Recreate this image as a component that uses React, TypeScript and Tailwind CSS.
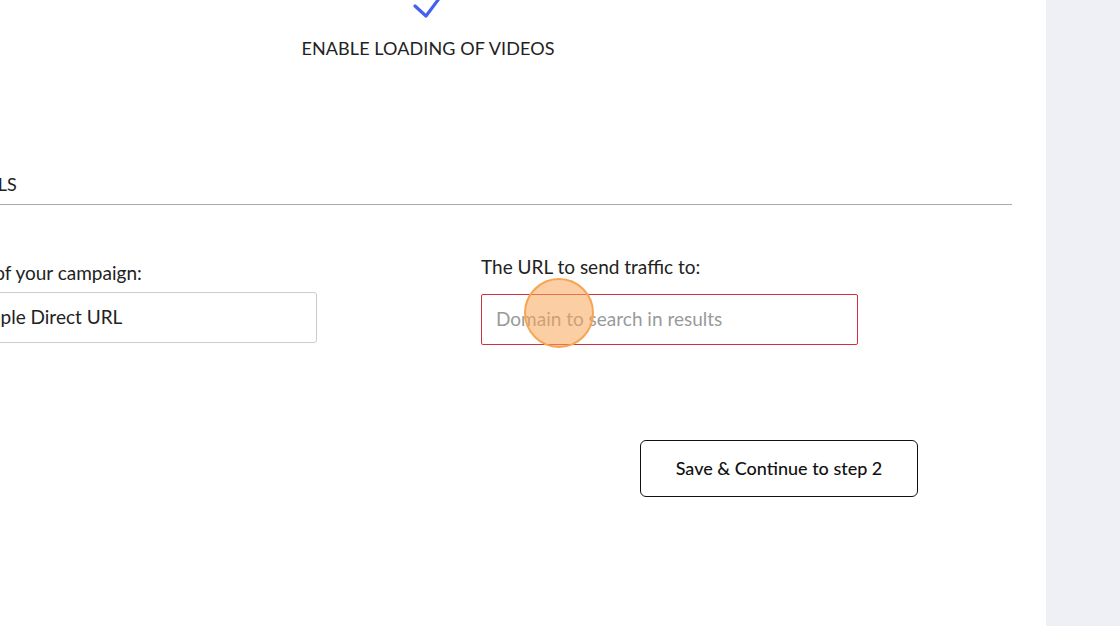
export default function App() {
  return (
    <div
      className="flex h-[626px] w-[1120px] overflow-hidden bg-white text-[#222]"
      style={{ fontFamily: "Lato, 'Noto Sans', sans-serif" }}
    >
      <main className="relative flex-1 overflow-hidden bg-white">
        {/* option: enable videos */}
        <div className="ml-[278px] flex w-[300px] flex-col items-center">
          <svg
            width="30"
            height="20"
            viewBox="0 0 30 20"
            className="-mt-[1px]"
            fill="none"
            stroke="#4361ee"
            strokeWidth="3.2"
            strokeLinecap="round"
            strokeLinejoin="round"
          >
            <polyline points="2,7 13,17 28,-3" />
          </svg>
          <span className="mt-[17px] text-[18px] leading-6 tracking-[0.1px]">
            ENABLE LOADING OF VIDEOS
          </span>
        </div>

        <section className="-ml-[60px] mr-[34px] mt-[112px]">
          <h3 className="border-b border-[#aaa] pb-[8px] pl-[7px] text-[18px] leading-6">
            DETAILS
          </h3>

          <div className="mt-[50px] flex gap-[164px]">
            <div className="w-[377px] pt-[6px]">
              <label className="block text-[19px] leading-6">
                Name of your campaign:
              </label>
              <div className="mt-[7px] flex h-[51px] items-center rounded-[3px] border border-[#ccc] px-[14px] text-[19px]">
                Example Direct URL
              </div>
            </div>
            <div className="w-[377px]">
              <label className="block text-[19px] leading-6">
                The URL to send traffic to:
              </label>
              <div className="mt-[15px] flex h-[51px] items-center rounded-[2px] border border-[#d0303e] px-[14px] text-[19px] text-[#9a9a9a]">
                Domain to search in results
              </div>
            </div>
          </div>
        </section>

        <div className="ml-[640px] mt-[95px]">
          <button className="h-[57px] w-[278px] rounded-[6px] border-[1.5px] border-[#111] bg-white text-[18px] font-medium text-[#111]">
            Save &amp; Continue to step 2
          </button>
        </div>

        {/* click indicator */}
        <div className="absolute left-[524px] top-[278px] h-[70px] w-[70px] rounded-full border-2 border-[#f7a454] bg-[#f9a55a]/55" />
      </main>
      <aside className="w-[74px] bg-[#eff0f5]" />
    </div>
  );
}
